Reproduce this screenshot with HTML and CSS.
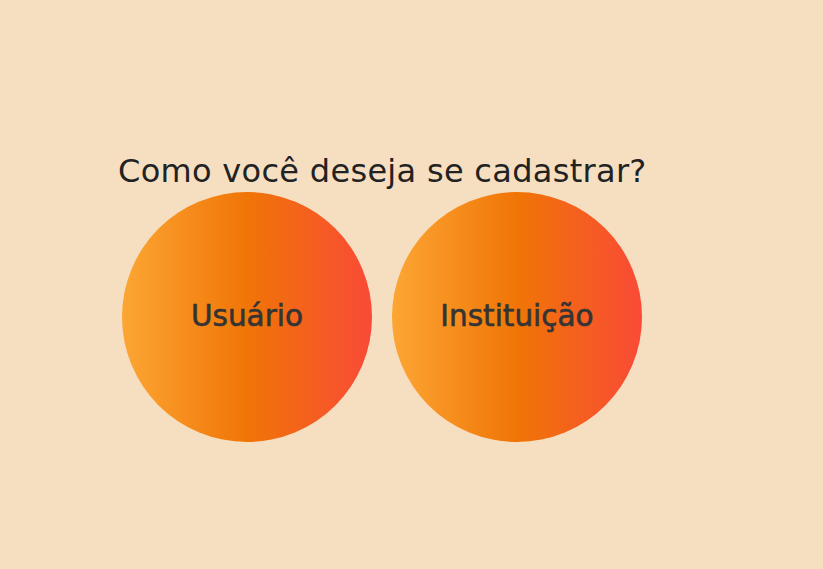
FILE: index.html
```html
<!DOCTYPE html>
<html lang="pt-BR">
<head>
<meta charset="utf-8">
<title>Cadastro</title>
<link rel="stylesheet" href="styles.css">
</head>
<body>
<main class="page">
  <h1 class="title">Como você deseja se cadastrar?</h1>
  <div class="options">
    <button class="option">Usuário</button>
    <button class="option">Instituição</button>
  </div>
</main>
</body>
</html>
```

FILE: styles.css
```css
html, body {
  margin: 0;
  padding: 0;
  background: #f6dfc1;
}
.page {
  padding: 151px 0 0 118px;
  font-family: "DejaVu Sans", sans-serif;
}
.title {
  margin: 0;
  font-size: 32px;
  font-weight: 400;
  letter-spacing: 0.3px;
  line-height: 41px;
  color: #222222;
}
.options {
  display: flex;
  gap: 20px;
  padding-left: 4px;
}
.option {
  width: 250px;
  height: 250px;
  border: none;
  border-radius: 50%;
  padding: 0 0 2px;
  background: linear-gradient(to right, #fca634 0%, #f07506 50%, #f94a37 100%);
  font-family: "DejaVu Sans", sans-serif;
  font-size: 29.5px;
  font-weight: 400;
  -webkit-text-stroke: 0.6px #343434;
  color: #343434;
}
```
